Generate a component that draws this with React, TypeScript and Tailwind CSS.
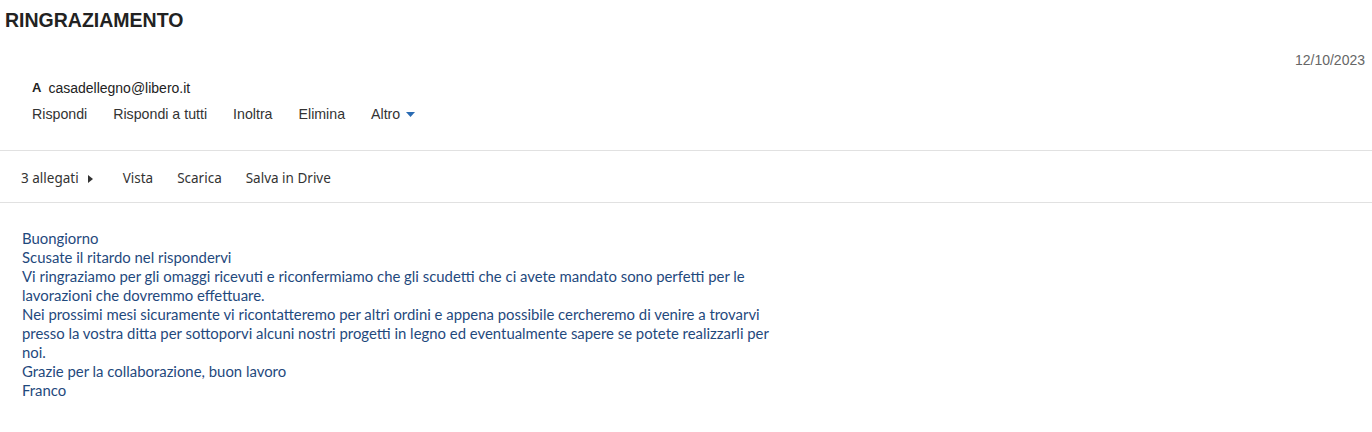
export default function App() {
    const actions = ['Rispondi', 'Rispondi a tutti', 'Inoltra', 'Elimina']
    const bodyLines = [
        'Buongiorno',
        'Scusate il ritardo nel rispondervi',
        'Vi ringraziamo per gli omaggi ricevuti e riconfermiamo che gli scudetti che ci avete mandato sono perfetti per le',
        'lavorazioni che dovremmo effettuare.',
        'Nei prossimi mesi sicuramente vi ricontatteremo per altri ordini e appena possibile cercheremo di venire a trovarvi',
        'presso la vostra ditta per sottoporvi alcuni nostri progetti in legno ed eventualmente sapere se potete realizzarli per',
        'noi.',
        'Grazie per la collaborazione, buon lavoro',
        'Franco',
    ]

    return (
        <div className="w-[1372px] h-[432px] bg-white overflow-hidden font-['Liberation_Sans',Arial,sans-serif]">
            <h1 className="pl-[5px] pt-[9px] text-[19.5px] leading-[22px] font-bold text-[#222]">
                RINGRAZIAMENTO
            </h1>

            <div className="flex justify-end pr-[7px] mt-[20px] text-[14px] leading-[18px] text-[#666]">
                12/10/2023
            </div>

            <div className="pl-[32px] mt-[10px]">
                <div className="flex items-center gap-[7px] text-[14px] leading-[18px] text-[#222]">
                    <span className="font-bold text-[13px]">A</span>
                    <span>casadellegno@libero.it</span>
                </div>
                <div className="flex items-center gap-[26px] mt-[8px] text-[14.2px] leading-[18px] text-[#333]">
                    {actions.map((a) => (
                        <span key={a}>{a}</span>
                    ))}
                    <span className="flex items-center gap-[6px]">
                        Altro
                        <svg width="9" height="5" viewBox="0 0 9 5">
                            <path d="M0 0 L9 0 L4.5 5 Z" fill="#2a6bb3" />
                        </svg>
                    </span>
                </div>
            </div>

            <div className="mt-[27px] border-t border-[#e1e1e1]" />

            <div className="h-[51px] pt-[4px] flex items-center pl-[21px] text-[13.5px] text-[#333] font-['Noto_Sans',sans-serif]">
                <span className="flex items-center gap-[9px]">
                    3 allegati
                    <svg width="5" height="8" viewBox="0 0 5 8">
                        <path d="M0 0 L5 4 L0 8 Z" fill="#333" />
                    </svg>
                </span>
                <div className="flex items-center gap-[24px] ml-[30px]">
                    <span>Vista</span>
                    <span>Scarica</span>
                    <span>Salva in Drive</span>
                </div>
            </div>

            <div className="border-t border-[#e1e1e1]" />

            <div className="pl-[22px] pt-[26px] text-[14.9px] leading-[19px] text-[#1f497d] font-['Lato','Noto_Sans',sans-serif]">
                {bodyLines.map((line, i) => (
                    <div key={i} className="whitespace-nowrap">{line}</div>
                ))}
            </div>
        </div>
    )
}
